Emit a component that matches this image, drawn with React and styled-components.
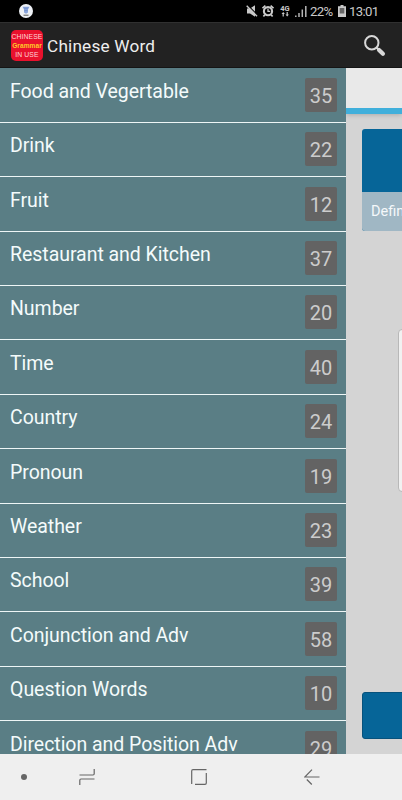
import React from "react";
import styled, { createGlobalStyle } from "styled-components";

const categories = [
  { name: "Food and Vegertable", count: 35 },
  { name: "Drink", count: 22 },
  { name: "Fruit", count: 12 },
  { name: "Restaurant and Kitchen", count: 37 },
  { name: "Number", count: 20 },
  { name: "Time", count: 40 },
  { name: "Country", count: 24 },
  { name: "Pronoun", count: 19 },
  { name: "Weather", count: 23 },
  { name: "School", count: 39 },
  { name: "Conjunction and Adv", count: 58 },
  { name: "Question Words", count: 10 },
  { name: "Direction and Position Adv", count: 29 },
];

const MuteIcon = () => (
  <svg width="12" height="14" viewBox="0 0 12 14">
    <path d="M1 4.500h3L9 1.300v11.400L4 9.500H1z" fill="#c9c9c9" />
    <path d="M1.500 1L12 11.500" stroke="#000" strokeWidth="1.200" />
    <path d="M0.700 1.800L11 12.200" stroke="#c9c9c9" strokeWidth="1.400" />
  </svg>
);

const AlarmIcon = () => (
  <svg width="12" height="14" viewBox="0 0 12 14">
    <circle cx="6" cy="7.200" r="4.100" fill="none" stroke="#c9c9c9" strokeWidth="2.100" />
    <path d="M6 4.800v2.600h2.200" fill="none" stroke="#c9c9c9" strokeWidth="1.300" />
    <path d="M0.500 4.200L3.400 1.600M11.500 4.200L8.600 1.600M2.800 10.800L1.400 12.600M9.200 10.800l1.400 1.800" stroke="#c9c9c9" strokeWidth="1.700" />
  </svg>
);

const DataArrows = () => (
  <svg width="8" height="5" viewBox="0 0 8 5">
    <path d="M0.500 2L2.200 0l1.700 2H2.800v2.500H1.600V2zM4.500 2.500h1.100V0h1.200v2.500h1.100L6.200 4.500z" fill="#c9c9c9" />
  </svg>
);

const SignalIcon = () => (
  <svg width="12" height="13" viewBox="0 0 12 13">
    <path d="M0.800 10.500V12M4 8v4M7.300 4.500V12M10.800 1v11" stroke="#b5b5b5" strokeWidth="1.500" />
  </svg>
);

const BatteryIcon = () => (
  <svg width="8" height="12" viewBox="0 0 8 12">
    <path d="M2.500 0h3v1.200H8V12H0V1.200h2.500z" fill="#c9c9c9" />
    <path d="M1.700 3h4.600v5.500H1.700z" fill="#666" />
  </svg>
);

const SearchIcon = () => (
  <svg width="24" height="24" viewBox="0 0 24 24">
    <circle cx="8.800" cy="8.700" r="6.700" fill="none" stroke="#d8d8d8" strokeWidth="2" />
    <path d="M13.500 13.500l2.500 2.500" stroke="#d8d8d8" strokeWidth="2" />
    <path d="M16 16l3.900 3.700" stroke="#d8d8d8" strokeWidth="4.200" strokeLinecap="round" />
  </svg>
);

const NotificationIcon = () => (
  <svg width="14" height="14" viewBox="0 0 14 14">
    <circle cx="7" cy="7" r="7" fill="#eef1f6" />
    <path d="M3.500 2.800h7L9 5.500v3L7 9.800 5 8.500v-3z" fill="#8aa5dc" />
    <path d="M5 4.200h4M5.500 6.500h3" stroke="#6f8fcc" strokeWidth="0.800" />
    <path d="M4.500 11.200h5" stroke="#555" strokeWidth="1" />
  </svg>
);

const RecentsIcon = () => (
  <svg width="16" height="18" viewBox="0 0 16 18">
    <path d="M0.500 7H14Q15.200 7 15.200 5.800V1M15.500 11H2Q0.800 11 0.800 12.200V17" fill="none" stroke="#666" strokeWidth="1.200" />
  </svg>
);

const HomeIcon = () => (
  <svg width="16" height="16" viewBox="0 0 16 16">
    <path d="M0.700 15V2Q0.700 0.700 2 0.700H15.500M15.300 4V14Q15.300 15.300 14 15.300H4" fill="none" stroke="#666" strokeWidth="1.200" />
  </svg>
);

const BackIcon = () => (
  <svg width="16" height="16" viewBox="0 0 16 16">
    <path d="M15.500 8H0.800L8 0.700M2.800 10.500L7.800 15.500" fill="none" stroke="#666" strokeWidth="1.200" />
  </svg>
);

const App = () => {
  return (
    <Screen>
      <GlobalStyle />
      <StatusBar>
        <NotificationIcon />
        <StatusIcons>
          <MuteIcon />
          <AlarmIcon />
          <Network>
            <span>4G</span>
            <DataArrows />
          </Network>
          <SignalIcon />
          <StatusText $width={23}>22%</StatusText>
          <BatteryIcon />
          <StatusText $width={31}>13:01</StatusText>
        </StatusIcons>
      </StatusBar>
      <ActionBar>
        <Logo>
          <span>CHINESE</span>
          <strong>Grammar</strong>
          <span>IN USE</span>
        </Logo>
        <Title>Chinese Word</Title>
        <SearchIcon />
      </ActionBar>
      <Main>
        <Drawer>
          {categories.map((category) => (
            <Row key={category.name}>
              <Name>{category.name}</Name>
              <Count>{category.count}</Count>
            </Row>
          ))}
        </Drawer>
        <Content>
          <TabStrip />
          <WordCard>
            <Definition>Definition</Definition>
          </WordCard>
          <Panel />
          <NextButton />
        </Content>
      </Main>
      <NavBar>
        <Dot />
        <RecentsIcon />
        <HomeIcon />
        <BackIcon />
      </NavBar>
    </Screen>
  );
};

export default App;

const GlobalStyle = createGlobalStyle`
  * {
    box-sizing: border-box;
  }
  body {
    margin: 0;
    font-family: Roboto, sans-serif;
  }
  svg {
    display: block;
    flex-shrink: 0;
  }
`;

const Screen = styled.div`
  width: 402px;
  height: 800px;
  display: flex;
  flex-direction: column;
  overflow: hidden;
  background: #d4d4d4;
`;

const StatusBar = styled.header`
  height: 22px;
  flex-shrink: 0;
  display: flex;
  align-items: center;
  justify-content: space-between;
  padding: 0 21px 0 19px;
  background: #000;
`;

const StatusIcons = styled.div`
  display: flex;
  align-items: center;
  gap: 4px;
`;

const Network = styled.div`
  width: 10px;
  margin: 0 1px 0 2px;
  display: flex;
  flex-direction: column;
  align-items: center;
  color: #c9c9c9;
  font-size: 7.5px;
  line-height: 7px;
  font-weight: 700;
`;

const StatusText = styled.span`
  width: ${(props) => props.$width}px;
  margin-left: -1px;
  margin-right: 1px;
  padding-top: 1px;
  color: #c9c9c9;
  font-size: 13.2px;
  line-height: 14px;
  letter-spacing: -0.65px;
  white-space: nowrap;
`;

const ActionBar = styled.div`
  height: 46px;
  flex-shrink: 0;
  display: flex;
  align-items: center;
  padding: 1px 15px 0 11px;
  background: #222;
  border-top: 1px solid #303030;
  border-bottom: 1px solid #151515;
`;

const Logo = styled.div`
  width: 32px;
  height: 31px;
  display: flex;
  flex-direction: column;
  align-items: center;
  justify-content: center;
  border-radius: 5px;
  background: #e9112d;
  color: #ffd5d8;
  font-family: "Liberation Sans", sans-serif;
  font-size: 6.8px;
  line-height: 9px;
  letter-spacing: 0.1px;
  white-space: nowrap;

  strong {
    color: #ffc928;
    font-size: 6.6px;
    letter-spacing: 0.05px;
  }
`;

const Title = styled.h1`
  flex: 1;
  margin: 0 0 0 4px;
  color: #eee;
  font-size: 17.2px;
  font-weight: 400;
  letter-spacing: 0.2px;
`;

const Main = styled.main`
  height: 686px;
  flex-shrink: 0;
  display: flex;
  overflow: hidden;
`;

const Drawer = styled.ul`
  width: 346px;
  flex-shrink: 0;
  margin: 0;
  padding: 0.5px 0 0;
  list-style: none;
  background: #5a7e85;
`;

const Row = styled.li`
  height: 54.4px;
  display: flex;
  justify-content: space-between;
  padding: 9.4px 9px 0 10px;
  border-bottom: 1px solid #eef6f6;
`;

const Name = styled.span`
  color: #f4fbfb;
  font-size: 19.5px;
  line-height: 27px;
  letter-spacing: -0.04px;
`;

const Count = styled.span`
  width: 32px;
  height: 34px;
  border-radius: 2px;
  background: #636363;
  color: #ccc;
  font-size: 20px;
  line-height: 36px;
  text-align: center;
`;

const Content = styled.section`
  flex: 1;
  display: flex;
  flex-direction: column;
  overflow: hidden;
  background: #d4d4d4;
`;

const TabStrip = styled.div`
  height: 46px;
  flex-shrink: 0;
  background: #e9e9e9;
  border-bottom: 6px solid #40afdb;
  box-shadow: 0 1px 5px rgba(0, 0, 0, 0.2);
`;

const WordCard = styled.div`
  width: 300px;
  height: 102px;
  flex-shrink: 0;
  margin: 15px 0 0 16px;
  padding-top: 63px;
  border-radius: 3px;
  overflow: hidden;
  background: #066598;
`;

const Definition = styled.div`
  height: 39px;
  padding-left: 9px;
  background: #a0b7c4;
  color: #f4f8fa;
  font-size: 14.5px;
  line-height: 40px;
`;

const Panel = styled.div`
  width: 300px;
  height: 163px;
  flex-shrink: 0;
  margin: 98px 0 0 52px;
  border: 1px solid #b8b8b8;
  border-radius: 4px;
  background: #f1f1f1;
`;

const NextButton = styled.div`
  width: 300px;
  height: 47px;
  flex-shrink: 0;
  margin: 200px 0 0 16px;
  border: 1px solid #07527c;
  border-radius: 3px;
  background: #066598;
`;

const NavBar = styled.nav`
  height: 46px;
  flex-shrink: 0;
  display: flex;
  align-items: center;
  padding-left: 21px;
  background: #efefef;

  svg:nth-of-type(1) {
    margin-left: 52px;
  }
  svg:nth-of-type(2) {
    margin-left: 96px;
  }
  svg:nth-of-type(3) {
    margin-left: 97px;
  }
`;

const Dot = styled.span`
  width: 6px;
  height: 6px;
  border-radius: 50%;
  background: #666;
`;
